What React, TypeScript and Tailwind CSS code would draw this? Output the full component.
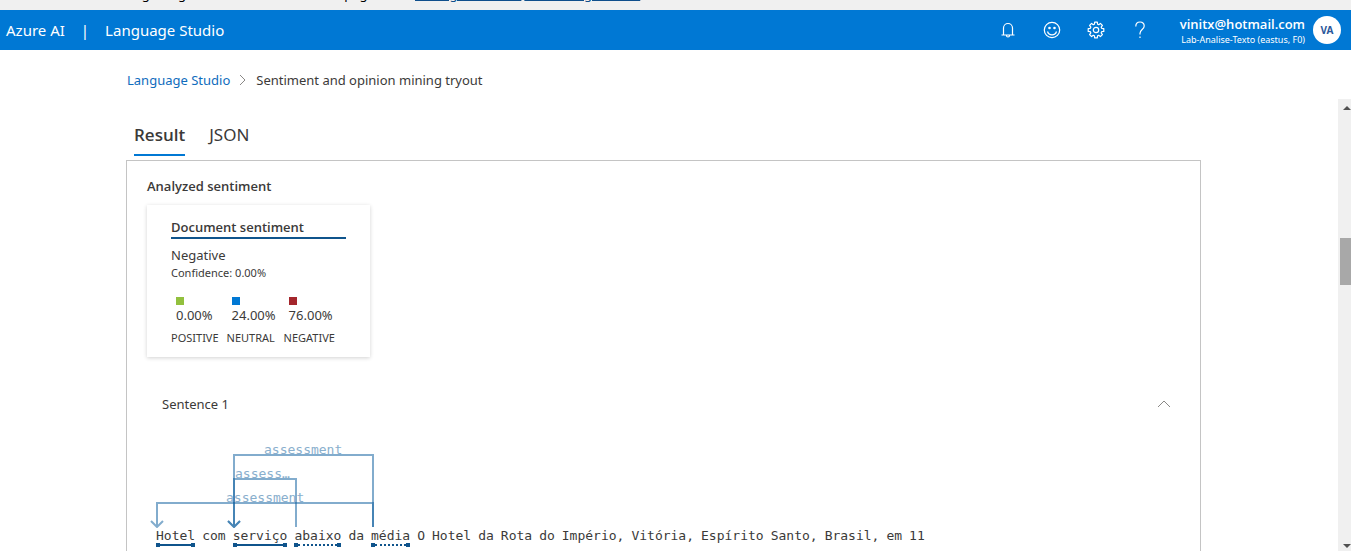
import type { ReactNode } from "react";

type Mark = "target" | "assessment";
type Token = { text: string; mark?: Mark };

const tokens: Token[] = [
  { text: "Hotel", mark: "target" },
  { text: "com" },
  { text: "serviço", mark: "target" },
  { text: "abaixo", mark: "assessment" },
  { text: "da" },
  { text: "média", mark: "assessment" },
  ..."O Hotel da Rota do Império, Vitória, Espírito Santo, Brasil, em 11"
    .split(" ")
    .map((text) => ({ text })),
];

const scores = [
  { value: "0.00%", label: "POSITIVE", color: "bg-[#92c03e]" },
  { value: "24.00%", label: "NEUTRAL", color: "bg-[#0078d4]" },
  { value: "76.00%", label: "NEGATIVE", color: "bg-[#a4262c]" },
];

function IconButton({ label, children }: { label: string; children: ReactNode }) {
  return (
    <button type="button" aria-label={label} className="flex h-10 w-11 items-center justify-center">
      <svg width="18" height="18" viewBox="0 0 18 18" fill="none" stroke="currentColor" strokeWidth="1.2">
        {children}
      </svg>
    </button>
  );
}

function TokenView({ text, mark }: Token) {
  return (
    <span className="flex flex-col">
      <span>{text}</span>
      {mark && (
        <span className="flex items-center text-[#0f548c]">
          <span className="size-1 bg-current" />
          <span
            className={
              mark === "target"
                ? "flex-1 border-t-2 border-solid border-current"
                : "flex-1 border-t-2 border-dotted border-current"
            }
          />
          <span className="size-1 bg-current" />
        </span>
      )}
    </span>
  );
}

function Arcs() {
  return (
    <svg
      width="240"
      height="88"
      viewBox="0 0 240 88"
      fill="none"
      className="block"
      fontFamily='"DejaVu Sans Mono", monospace'
      fontSize="13"
    >
      <g stroke="#0f5f9f" strokeOpacity="0.52" strokeWidth="2">
        <path d="M223 87V15H84V87M78 81l6 6l6-6" />
        <path d="M146 87V39H84V87M78 81l6 6l6-6" />
        <path d="M223 87V63H7V87M1 81l6 6l6-6" />
      </g>
      <g fill="#8aafcd">
        <text x="114" y="14">assessment</text>
        <text x="85" y="38">assess…</text>
        <text x="76" y="62">assessment</text>
      </g>
    </svg>
  );
}

export default function App() {
  return (
    <div className="flex h-screen flex-col overflow-hidden bg-white font-['Noto_Sans',sans-serif] text-[13px] leading-5 text-[#3b3a39]">
      <div className="flex h-[10px] shrink-0 items-end gap-[3px] overflow-hidden whitespace-nowrap bg-[#f0f0f0] pb-[6px] pl-[102px] text-black">
        <p className="w-[310px]">Existing design tools can be found on a page</p>
        <a href="#" className="text-[#0f4f8c] underline">Manage resource</a>
        <a href="#" className="text-[#0f4f8c] underline">Resource guidance</a>
      </div>

      <header className="flex h-10 shrink-0 items-center bg-[#0078d4] pl-[6px] pr-[10px] text-white">
        <div className="flex items-center gap-4 text-[15px]">
          <span>Azure AI</span>
          <span>|</span>
          <span>Language Studio</span>
        </div>
        <nav className="ml-auto flex items-center" aria-label="Tools">
          <IconButton label="Notifications">
            <path d="M2.500 14h13M4.500 14V7a4.500 4.500 0 0 1 9 0v7M7.500 14.500a1.500 1.500 0 0 0 3 0" />
          </IconButton>
          <IconButton label="Feedback">
            <circle cx="9" cy="9" r="7.700" />
            <path d="M4.500 10.500a4.700 4.700 0 0 0 9 0" />
            <circle cx="6.500" cy="7" r=".7" fill="currentColor" />
            <circle cx="11.500" cy="7" r=".7" fill="currentColor" />
          </IconButton>
          <IconButton label="Settings">
            <path
              strokeLinejoin="round"
              d="M7.700 1.200h2.600l.3 2 1.100.5 1.700-1.300 2 2L14.200 6.200l.5 1.100 2.100.3v2.800l-2.100.3-.5 1.100 1.200 1.800-2 2-1.700-1.300-1.100.5-.3 2H7.700l-.3-2-1.100-.5-1.700 1.300-2-2L3.800 11.800l-.5-1.100-2.100-.3V7.600l2.100-.3.500-1.100L2.600 4.400l2-2L6.300 3.700l1.100-.5z"
            />
            <circle cx="9" cy="9" r="2.700" />
          </IconButton>
          <IconButton label="Help">
            <path d="M4.800 5.500c0-2.700 1.800-4.500 4.200-4.500s4.200 1.600 4.200 4c0 3.200-4.200 3.800-4.200 7.200v1.200M9 15.500v1.500" />
          </IconButton>
        </nav>
        <button type="button" className="ml-[18px] flex items-center gap-2">
          <span className="flex flex-col items-end pt-1">
            <span className="font-['Open_Sans',sans-serif] text-[13px] font-semibold leading-4">vinitx@hotmail.com</span>
            <span className="text-[9px] leading-4">Lab-Analise-Texto (eastus, F0)</span>
          </span>
          <span className="flex size-7 items-center justify-center rounded-full bg-white text-[10px] font-bold text-[#2b579a]">
            VA
          </span>
        </button>
      </header>

      <nav aria-label="Breadcrumb" className="flex h-[49px] shrink-0 items-center gap-2 pl-[127px] pt-[10px]">
        <a href="#" className="text-[#0f6cbd]">Language Studio</a>
        <svg width="10" height="12" viewBox="0 0 10 12" fill="none" stroke="#8a8886">
          <path d="M2 1l5 5l-5 5" />
        </svg>
        <span>Sentiment and opinion mining tryout</span>
      </nav>

      <div className="flex min-h-0 flex-1">
        <main className="min-w-0 flex-1 overflow-hidden pl-[126px] pr-[137px] pt-5">
          <div role="tablist" className="flex gap-6 pl-2 text-[17px]">
            <button type="button" role="tab" aria-selected="true" className="h-[37px] border-b-2 border-[#0078d4] pb-1 font-['Open_Sans',sans-serif] font-semibold">
              Result
            </button>
            <button type="button" role="tab" aria-selected="false" className="h-[37px] border-b-2 border-transparent pb-1">
              JSON
            </button>
          </div>

          <section className="mt-1 border border-[#c4c4c4] px-5 pb-10 pt-[15px]">
            <h2 className="font-['Open_Sans',sans-serif] font-semibold">Analyzed sentiment</h2>
            <div className="mt-[9px] w-[223px] px-6 pb-[9px] pt-3 shadow-[0_1px_4px_rgba(0,0,0,0.18)]">
              <h3 className="border-b-2 border-[#0f548c] font-['Open_Sans',sans-serif] font-semibold">
                Document sentiment
              </h3>
              <p className="mt-[6px]">Negative</p>
              <p className="text-[11px] leading-4">Confidence: 0.00%</p>
              <ul className="mt-4 flex gap-2">
                {scores.map((s) => (
                  <li key={s.label}>
                    <div className="ml-[5px]">
                      <div className={`size-2 ${s.color}`} />
                      <div>{s.value}</div>
                    </div>
                    <div className="mt-[3px] text-[11px]">{s.label}</div>
                  </li>
                ))}
              </ul>
            </div>

            <button type="button" aria-expanded="true" className="mt-[37px] flex w-full items-center justify-between pl-[15px] pr-[9px]">
              <span>Sentence 1</span>
              <svg width="14" height="8" viewBox="0 0 14 8" fill="none" stroke="#8a8886">
                <path d="M1 7l6-6l6 6" />
              </svg>
            </button>

            <div className="mt-[26px] pl-[3px]">
              <Arcs />
              <div className="flex flex-wrap gap-x-[7px] pl-[6px] pt-px font-['DejaVu_Sans_Mono',monospace] text-[13px] leading-[14px]">
                {tokens.map((t, i) => (
                  <TokenView key={i} {...t} />
                ))}
              </div>
            </div>
          </section>
        </main>

        <div aria-hidden="true" className="flex w-[13px] flex-col bg-[#f0f0f0] pl-[2px]">
          <svg width="11" height="17" viewBox="0 0 11 17" fill="#505050">
            <path d="M3 11l4-4l4 4z" />
          </svg>
          <div className="mt-[122px] h-[47px] bg-[#a8a8a8]" />
          <svg className="mt-auto" width="11" height="10" viewBox="0 0 11 10" fill="#505050">
            <path d="M3 3h8l-4 4z" />
          </svg>
        </div>
      </div>
    </div>
  );
}
